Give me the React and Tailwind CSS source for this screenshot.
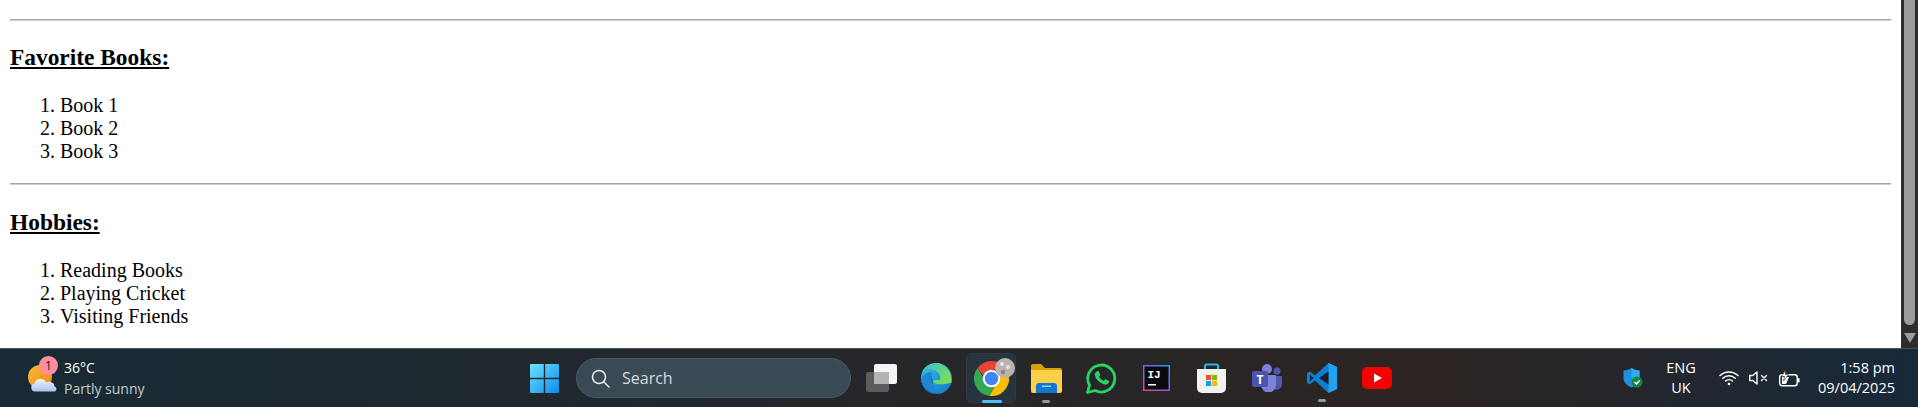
const books = ['Book 1', 'Book 2', 'Book 3']
const hobbies = ['Reading Books', 'Playing Cricket', 'Visiting Friends']

function Weather() {
  return (
    <svg width="30" height="30" viewBox="0 0 30 30" className="overflow-visible">
      <defs>
        <linearGradient id="sun" x1="0" y1="0" x2="1" y2="1">
          <stop offset="0" stopColor="#fbb934" />
          <stop offset="1" stopColor="#ee8a12" />
        </linearGradient>
        <linearGradient id="cloud" x1="0" y1="0" x2="0" y2="1">
          <stop offset="0" stopColor="#f0f5fd" />
          <stop offset="1" stopColor="#a9c3ec" />
        </linearGradient>
      </defs>
      <circle cx="12" cy="10" r="12" fill="url(#sun)" />
      <path d="M6 27.500a4 4 0 0 1-.6-7.900A6 6 0 0 1 11 15a6.500 6.500 0 0 1 6.500 3.500 4.500 4.500 0 0 1 3.500-.5 4.800 4.800 0 0 1 4.500 4.500 2.700 2.700 0 0 1 .5 5z" transform="translate(1 -3)" fill="url(#cloud)" />
    </svg>
  )
}

function WinLogo() {
  return (
    <svg width="29" height="29" viewBox="0 0 29 29">
      <defs>
        <linearGradient id="win" x1="0" y1="0" x2="1" y2="1">
          <stop offset="0" stopColor="#6fe3fb" />
          <stop offset="1" stopColor="#0a8cf0" />
        </linearGradient>
      </defs>
      <path d="M1 0h12.800v13.800H0V1a1 1 0 0 1 1-1zM15.200 0H28a1 1 0 0 1 1 1v12.800H15.200zM0 15.200h13.800V29H1a1 1 0 0 1-1-1zM15.200 15.200H29V28a1 1 0 0 1-1 1H15.200z" fill="url(#win)" />
    </svg>
  )
}

function TaskView() {
  return (
    <svg width="31" height="29" viewBox="0 0 31 29">
      <rect x="8" y="0" width="23" height="20" rx="2" fill="#f4f4f4" />
      <rect x="0" y="8" width="23" height="20" rx="2" fill="#5c5c5c" />
      <rect x="8" y="8" width="15" height="12" fill="#b4b4b4" />
    </svg>
  )
}

function Edge() {
  return (
    <svg width="31" height="31" viewBox="0 0 31 31">
      <defs>
        <linearGradient id="edgeA" x1="0" y1="0" x2="1" y2="1">
          <stop offset="0" stopColor="#36c5e8" />
          <stop offset="1" stopColor="#1174c4" />
        </linearGradient>
        <linearGradient id="edgeB" x1="0" y1="0" x2="1" y2="0.6">
          <stop offset="0" stopColor="#2fc0d8" />
          <stop offset="1" stopColor="#7fdc5c" />
        </linearGradient>
      </defs>
      <circle cx="15.500" cy="15.500" r="15.500" fill="url(#edgeA)" />
      <path d="M30.500 19.500C31.500 9 24 0 15 0 8.500 0 3 4 1 9.500 4 6 10 5.500 14 7.500c4.500 2.300 6 6 5 9.500H12c0 2.500 2 4 5 4.200 5 .3 10-.5 13.500-1.700z" fill="url(#edgeB)" />
      <path d="M12 17c-1.500 4.500 1 10.500 7 12.500-1.500 1-3 1.500-4.500 1.500C7 31 .5 25 .5 17 2 12.500 6.500 9.500 11 10.500c-1.500 1.500-.5 4.500 1 6.500z" fill="#0f5ea8" />
      <path d="M1 15.500C2.500 11 7 8.500 11.500 9.500 9.500 14 10 24 19 29.800 9 32 0 25 1 15.500z" fill="#1f87d2" />
    </svg>
  )
}

function Chrome() {
  return (
    <svg width="35" height="35" viewBox="0 0 32 32">
      <path d="M16 0a16 16 0 0 1 13.860 8H16a8 8 0 0 0-7.600 5.500L3.300 6.300A16 16 0 0 1 16 0z" fill="#ea4335" />
      <path d="M3.300 6.300l6.800 11.800A8 8 0 0 0 18.400 23.700L14 31.900A16 16 0 0 1 3.300 6.300z" fill="#34a853" />
      <path d="M29.860 8A16 16 0 0 1 14 31.900l6.800-11.700A8 8 0 0 0 21.500 10.500L22 8z" fill="#fbbc04" />
      <circle cx="16" cy="16" r="8" fill="#fff" />
      <circle cx="16" cy="16" r="6.200" fill="#4285f4" />
    </svg>
  )
}

function Avatar() {
  return (
    <svg width="20" height="20" viewBox="0 0 20 20">
      <circle cx="10" cy="10" r="10" fill="#b9b4ae" />
      <circle cx="7" cy="6" r="2" fill="#e8e4df" />
      <circle cx="13" cy="9" r="2" fill="#e8e4df" />
      <circle cx="8" cy="14" r="2.200" fill="#8d8782" />
    </svg>
  )
}

function Folder() {
  return (
    <svg width="31" height="29" viewBox="0 0 31 29">
      <path d="M0 2a2 2 0 0 1 2-2h8l4 4h15a2 2 0 0 1 2 2v3H0z" fill="#d8a106" />
      <path d="M0 6h29a2 2 0 0 1 2 2v19a2 2 0 0 1-2 2H2a2 2 0 0 1-2-2z" fill="#fbcf48" />
      <path d="M5 22a3 3 0 0 1 3-3h15a3 3 0 0 1 3 3v7H5z" fill="#0f78d4" />
      <rect x="11" y="21.500" width="9" height="1.500" fill="#9fd0f5" />
    </svg>
  )
}

function WhatsApp() {
  return (
    <svg width="31" height="31" viewBox="0 0 31 31">
      <path d="M1.500 29.500l2-7.300A13.500 13.500 0 1 1 9 27.500z" fill="none" stroke="#25d366" strokeWidth="2.800" strokeLinejoin="round" />
      <path d="M10.800 8.500c.5-.5 1.600-.6 2 0l1.300 2.800c.2.400 0 .9-.3 1.200l-.9 1c1 2 2.700 3.500 4.700 4.400l1.100-1.200c.3-.4.800-.5 1.200-.3l2.700 1.300c.5.300.5 1 .2 1.800-.6 1.500-2.500 2.400-4.300 2-4.800-1.100-8.800-5-9.700-9.400-.3-1.500.6-2.900 2-3.600z" fill="#25d366" />
    </svg>
  )
}

function Idea() {
  return (
    <svg width="27" height="26" viewBox="0 0 27 26">
      <defs>
        <linearGradient id="ij" x1="0" y1="1" x2="1" y2="0">
          <stop offset="0" stopColor="#f5408a" />
          <stop offset="0.5" stopColor="#7b5cf0" />
          <stop offset="1" stopColor="#10a8f5" />
        </linearGradient>
      </defs>
      <rect width="27" height="26" fill="url(#ij)" />
      <rect x="1.500" y="1.500" width="24" height="23" fill="#0a0a0f" />
      <text x="4.500" y="12.500" fill="#fff" fontSize="11" fontWeight="700" fontFamily="'Liberation Mono', monospace">IJ</text>
      <rect x="5" y="19" width="8" height="1.500" fill="#fff" />
    </svg>
  )
}

function Store() {
  return (
    <svg width="29" height="30" viewBox="0 0 29 30">
      <path d="M8 7V3a1.500 1.500 0 0 1 1.500-1.500h10A1.500 1.500 0 0 1 21 3v4" fill="none" stroke="#28b5ec" strokeWidth="2" />
      <path d="M0 6h29v19a5 5 0 0 1-5 5H5a5 5 0 0 1-5-5z" fill="#f1f1f0" />
      <rect x="9" y="12" width="5" height="5" fill="#f0511e" />
      <rect x="15" y="12" width="5" height="5" fill="#7fba00" />
      <rect x="9" y="18" width="5" height="5" fill="#00a4ef" />
      <rect x="15" y="18" width="5" height="5" fill="#ffb900" />
    </svg>
  )
}

function Teams() {
  return (
    <svg width="30" height="28" viewBox="0 0 30 28">
      <circle cx="15" cy="5" r="5" fill="#7b83d8" />
      <circle cx="25" cy="7" r="3.500" fill="#4f58ad" />
      <path d="M20 12h9a1 1 0 0 1 1 1v7a6 6 0 0 1-9 5z" fill="#4f58ad" />
      <path d="M9 11h14a1 1 0 0 1 1 1v9a7.500 7.500 0 0 1-15 0z" fill="#7b83d8" />
      <rect x="0" y="7" width="16" height="16" rx="2" fill="#4b53b0" />
      <text x="8" y="20" fill="#fff" fontSize="12" fontWeight="700" textAnchor="middle" fontFamily="'Open Sans', sans-serif">T</text>
    </svg>
  )
}

function VsCode() {
  return (
    <svg width="30" height="30" viewBox="0 0 30 30">
      <path d="M21.500 0L30 4v22l-8.500 4L8 17.500 2.800 21.500 0 20V10l2.800-1.500L8 12.500z" fill="#0f7fd0" />
      <path d="M21.500 0L30 4v22l-8.500 4z" fill="#22a3ee" />
      <path d="M21.500 8.500v13L12 15z" fill="#17202b" />
      <path d="M2.800 11.500L6.500 15l-3.700 3.500z" fill="#17202b" />
    </svg>
  )
}

function YouTube() {
  return (
    <svg width="30" height="22" viewBox="0 0 30 22">
      <rect width="30" height="22" rx="5" fill="#f40000" />
      <path d="M12 6.500l8 4.500-8 4.500z" fill="#fff" />
    </svg>
  )
}

function Shield() {
  return (
    <svg width="20" height="20" viewBox="0 0 20 20">
      <path d="M8.500 0c2 1.500 5 2.500 8 2.500V10c0 4.500-3.500 7.500-8 9.500C4 17.500.5 14.500.5 10V2.500c3 0 6-1 8-2.500z" fill="#1e8ede" />
      <path d="M8.500 0c2 1.500 5 2.500 8 2.500V10H8.500z" fill="#38a9ee" />
      <circle cx="14" cy="14" r="5.500" fill="#10893e" />
      <path d="M11.500 14l2 2 3-3.500" fill="none" stroke="#fff" strokeWidth="1.400" />
    </svg>
  )
}

function Wifi() {
  return (
    <svg width="20" height="16" viewBox="0 0 20 16" fill="none" stroke="#fff" strokeWidth="1.500" strokeLinecap="round">
      <path d="M1 5.500a13 13 0 0 1 18 0" />
      <path d="M3.800 8.300a9 9 0 0 1 12.400 0" />
      <path d="M6.600 11a5 5 0 0 1 6.800 0" />
      <circle cx="10" cy="14" r="1.300" fill="#fff" stroke="none" />
    </svg>
  )
}

function Muted() {
  return (
    <svg width="20" height="14" viewBox="0 0 20 14" fill="none" stroke="#fff" strokeWidth="1.400" strokeLinejoin="round">
      <path d="M.7 4.500h3L8 1v12L3.700 9.500h-3z" />
      <path d="M12.500 4.500l5 5M17.500 4.500l-5 5" strokeLinecap="round" />
    </svg>
  )
}

function Battery() {
  return (
    <svg width="21" height="17" viewBox="0 0 21 17">
      <rect x=".7" y="4.700" width="17.500" height="11" rx="2.500" fill="none" stroke="#fff" strokeWidth="1.400" />
      <rect x="19" y="8" width="1.600" height="4.500" rx=".8" fill="#fff" />
      <path d="M3 7h7l-3 7H3z" fill="#fff" />
      <path d="M6.500 0L2.500 6.500h3L4.500 11 9.500 4.500h-3z" fill="#fff" stroke="#2a2420" strokeWidth=".6" />
    </svg>
  )
}

function Section({ title, items }) {
  return (
    <>
      <h3 className="mt-[23.4px] mb-[23px] text-[23.4px] leading-[27px] font-bold underline">{title}</h3>
      <ol className="list-decimal pl-[50px] text-[20px] leading-[23px]">
        {items.map((item) => (
          <li key={item}>{item}</li>
        ))}
      </ol>
    </>
  )
}

export default function App() {
  return (
    <div className="h-[407px] w-[1918px] overflow-hidden flex flex-col font-['Liberation_Serif',serif] text-black">
      <div className="h-[348px] flex shrink-0">
        <main className="flex-1 bg-white px-[10px] pt-[19px]">
          <hr className="border-0 border-t border-b border-t-[#a6a6a6] border-b-[#cfcfcf]" />
          <Section title="Favorite Books:" items={books} />
          <hr className="border-0 border-t border-b border-t-[#a6a6a6] border-b-[#cfcfcf] mt-[20px]" />
          <Section title="Hobbies:" items={hobbies} />
        </main>
        {/* scrollbar */}
        <div className="w-[17px] bg-[#2c2c2c] flex flex-col items-center pb-[5px]">
          <div className="w-[11px] flex-1 bg-[#9b9b9b] rounded-b-[6px] mb-[8px]" />
          <div className="w-0 h-0 border-x-[6.5px] border-x-transparent border-t-[10px] border-t-[#9b9b9b]" />
        </div>
      </div>

      <footer className="relative h-[59px] flex items-center border-t border-[#4a5258] bg-gradient-to-r from-[#172a35] via-[#2c2422] via-75% to-[#16293a] text-white font-['Open_Sans',sans-serif]">
        <div className="relative w-[530px] shrink-0 pl-[28px] flex items-center gap-[6px]">
          <div className="relative w-[30px] h-[30px] mt-[8px]">
            <Weather />
            <span className="absolute left-[11px] top-[-11px] w-[19px] h-[19px] rounded-full bg-[#fb8fa0] text-[#202020] text-[12px] leading-[19px] text-center">1</span>
          </div>
          <div className="text-[14px] leading-[21px]">
            <div>36°C</div>
            <div className="text-[#c5cbce]">Partly sunny</div>
          </div>
        </div>

        <WinLogo />
        <div className="ml-[17px] w-[275px] h-[40px] rounded-full bg-[#3a4a54] border border-[#4a5962] flex items-center pl-[14px] gap-[12px] text-[#d5d9db] text-[16px]">
          <svg width="19" height="19" viewBox="0 0 19 19" fill="none" stroke="#e4e6e8" strokeWidth="1.600" strokeLinecap="round">
            <circle cx="8" cy="8" r="6.500" />
            <path d="M13 13l5 5" />
          </svg>
          Search
        </div>

        <div className="ml-[15px] w-[31px] flex justify-center"><TaskView /></div>
        <div className="ml-[24px] w-[31px] flex justify-center"><Edge /></div>

        <div className="relative ml-[14px] w-[50px] h-[50px] rounded-[6px] bg-[#26343f] border border-[#2f3c46] flex items-center justify-center">
          <Chrome />
          <span className="absolute right-[0px] top-[4px]"><Avatar /></span>
          <span className="absolute left-[15px] bottom-[-1px] w-[20px] h-[3px] rounded-full bg-[#4cc2ff]" />
        </div>

        <div className="relative ml-[15px] w-[31px] flex justify-center">
          <Folder />
          <span className="absolute left-[11px] bottom-[-10px] w-[8px] h-[3px] rounded-full bg-[#9a9a9a]" />
        </div>
        <div className="ml-[24px] w-[31px] flex justify-center"><WhatsApp /></div>
        <div className="ml-[26px] w-[27px] flex justify-center"><Idea /></div>
        <div className="ml-[27px] w-[29px] flex justify-center"><Store /></div>
        <div className="ml-[26px] w-[30px] flex justify-center"><Teams /></div>
        <div className="relative ml-[25px] w-[30px] flex justify-center">
          <VsCode />
          <span className="absolute left-[11px] bottom-[-9px] w-[8px] h-[3px] rounded-full bg-[#9a9a9a]" />
        </div>
        <div className="ml-[25px] w-[30px] flex justify-center"><YouTube /></div>

        <div className="ml-[231px] w-[20px] flex justify-center"><Shield /></div>
        <div className="ml-[20px] w-[36px] text-center text-[14.5px] leading-[20px]">
          <div>ENG</div>
          <div>UK</div>
        </div>
        <div className="ml-[20px]"><Wifi /></div>
        <div className="ml-[10px]"><Muted /></div>
        <div className="ml-[10px]"><Battery /></div>
        <div className="ml-[18px] w-[77px] text-right text-[14.5px] leading-[20px] whitespace-nowrap">
          <div>1:58 pm</div>
          <div>09/04/2025</div>
        </div>
      </footer>
    </div>
  )
}
